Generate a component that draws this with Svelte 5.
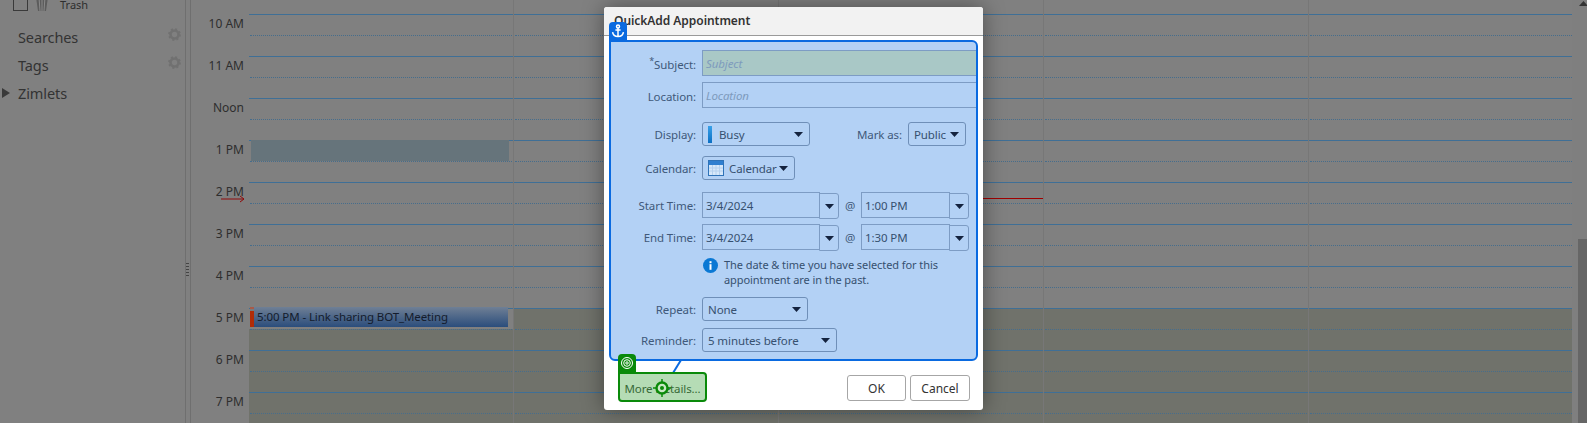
<script lang="ts">
  // Calendar backdrop under a QuickAdd dialog with anchor/target overlays.
  const hours = ['10 AM', '11 AM', 'Noon', '1 PM', '2 PM', '3 PM', '4 PM', '5 PM', '6 PM', '7 PM'];
  const days = [0, 1, 2, 3, 4];
  const isOff = (i: number) => i >= 7;
</script>

{#snippet caret()}
  <svg class="caret" width="9" height="5" viewBox="0 0 9 5"><path d="M0 0h9L4.5 5z" /></svg>
{/snippet}

{#snippet gear()}
  <svg class="gear" width="13" height="13" viewBox="0 0 13 13">
    <circle cx="6.5" cy="6.5" r="4" fill="none" stroke="#717171" stroke-width="2.6" />
    <circle cx="6.5" cy="6.5" r="5.4" fill="none" stroke="#717171" stroke-width="2" stroke-dasharray="2 2.24" />
  </svg>
{/snippet}

<div class="screen">
  <aside class="tree">
    <div class="trash">
      <span class="check"></span>
      <svg width="14" height="16" viewBox="0 0 14 16"><path d="M1 2h12l-2 14H3z" fill="#5c5c5c" /><path d="M4 2l1 14M7 2v14M10 2l-1 14" stroke="#8a8a8a" stroke-width="1" /></svg>
      <span class="trash-name">Trash</span>
    </div>
    <div class="node">Searches {@render gear()}</div>
    <div class="node">Tags {@render gear()}</div>
    <div class="node"><span class="tri"></span>Zimlets</div>
  </aside>

  <div class="sash"><span class="grip"></span></div>

  <div class="times">
    {#each hours as h}
      <div class="time">{h}</div>
    {/each}
    <svg class="now-arrow" width="24" height="8" viewBox="0 0 24 8"><path d="M0 4h23M19 1l4 3-4 3" fill="none" stroke="#8f0a0a" stroke-width="1" /></svg>
  </div>

  <div class="days">
    {#each days as d}
      <div class="day">
        {#each hours as _, i}
          <div class="hour" class:off={isOff(i) && (d > 0 || i > 7)} class:off-first={d === 0 && i === 7}></div>
        {/each}
      </div>
    {/each}
    <div class="slot"></div>
    <div class="appt"><span class="flag"></span>5:00 PM - Link sharing BOT_Meeting</div>
    <div class="now-line"></div>
  </div>

  <div class="scroll">
    <svg class="up" width="9" height="5" viewBox="0 0 9 5"><path d="M4.5 0L9 5H0z" /></svg>
    <div class="thumb"></div>
  </div>

  <section class="dialog">
    <header>QuickAdd Appointment</header>

    <div class="panel">
      <div class="row first">
        <span class="label nudge"><sup>*</sup>Subject:</span>
        <span class="input wide subject">Subject</span>
      </div>
      <div class="row r-location">
        <span class="label nudge">Location:</span>
        <span class="input wide">Location</span>
      </div>
      <div class="row r-display">
        <span class="label">Display:</span>
        <span class="select display"><span class="busy"></span>Busy {@render caret()}</span>
        <span class="label mark">Mark as:</span>
        <span class="select public">Public {@render caret()}</span>
      </div>
      <div class="row r-calendar">
        <span class="label">Calendar:</span>
        <span class="select calendar">
          <svg width="16" height="16" viewBox="0 0 16 16">
            <rect x=".5" y=".5" width="15" height="15" fill="#d6e8fa" stroke="#2f73b8" />
            <rect x="1" y="1" width="14" height="4" fill="#2f7fd0" />
            <path d="M1 8h14M1 11h14M4.5 5v10M8 5v10M11.5 5v10" stroke="#b4d0ee" stroke-width="1" />
          </svg>
          Calendar {@render caret()}
        </span>
      </div>
      <div class="row r-start">
        <span class="label">Start Time:</span>
        <span class="input date">3/4/2024</span><span class="drop">{@render caret()}</span>
        <span class="at">@</span>
        <span class="input clock">1:00 PM</span><span class="drop">{@render caret()}</span>
      </div>
      <div class="row r-end">
        <span class="label">End Time:</span>
        <span class="input date">3/4/2024</span><span class="drop">{@render caret()}</span>
        <span class="at">@</span>
        <span class="input clock">1:30 PM</span><span class="drop">{@render caret()}</span>
      </div>
      <div class="note">
        <svg width="15" height="15" viewBox="0 0 15 15">
          <circle cx="7.5" cy="7.5" r="7.5" fill="#0a78d4" />
          <rect x="6.5" y="6.2" width="2" height="5.6" fill="#fff" />
          <rect x="6.5" y="3.2" width="2" height="2" fill="#fff" />
        </svg>
        <p>The date &amp; time you have selected for this appointment are in the past.</p>
      </div>
      <div class="row r-repeat">
        <span class="label">Repeat:</span>
        <span class="select repeat">None {@render caret()}</span>
      </div>
      <div class="row r-reminder">
        <span class="label">Reminder:</span>
        <span class="select reminder">5 minutes before {@render caret()}</span>
      </div>
    </div>

    <footer>
      <button class="more">More Details...</button>
      <button class="ok">OK</button>
      <button class="cancel">Cancel</button>
    </footer>

    <!-- overlays from the element picker -->
    <span class="anchor-tab">
      <svg width="14" height="14" viewBox="0 0 14 14" fill="none" stroke="#fff" stroke-width="1.5">
        <circle cx="7" cy="2.4" r="1.5" />
        <path d="M7 4v9M4.4 6h5.2M1.6 8.2c.3 2.8 2.6 4.3 5.4 4.3s5.1-1.5 5.4-4.3" />
      </svg>
    </span>
    <svg class="link" width="12" height="14" viewBox="0 0 12 14"><path d="M10 0L2 13" stroke="#0a6ae0" stroke-width="2" /></svg>
    <span class="target-tab">
      <svg width="14" height="14" viewBox="0 0 14 14" fill="none" stroke="#fff" stroke-width="1">
        <circle cx="7" cy="7" r="5.5" /><circle cx="7" cy="7" r="3.3" /><circle cx="7" cy="7" r="1.2" />
      </svg>
    </span>
    <span class="target-box"></span>
    <svg class="target-mark" width="18" height="18" viewBox="0 0 18 18" fill="none" stroke="#0a8a0a">
      <circle cx="9" cy="9" r="5.5" stroke-width="2.4" fill="#c9e8c5" />
      <circle cx="9" cy="9" r="2" fill="#0a8a0a" stroke="none" />
      <path d="M9 0v3M9 15v3M0 9h3M15 9h3" stroke-width="1.5" />
    </svg>
  </section>
</div>

<style>
  :global(body) {
    margin: 0;
    background: #808080;
  }
  .screen {
    position: relative;
    width: 1587px;
    height: 423px;
    overflow: hidden;
    display: grid;
    grid-template-columns: 185px 6px 58px 1323px 15px;
    background: #808080;
    font-family: "Noto Sans", sans-serif;
    font-size: 12px;
    color: #2c2c2c;
  }

  .tree {
    border-right: 1px solid #6f6f6f;
    margin-right: -1px;
    color: #333;
  }
  .trash {
    display: flex;
    align-items: center;
    height: 10px;
    padding-left: 13px;
    font-size: 11px;
    margin-top: -2px;
    margin-bottom: 15px;
    color: #2e2e2e;
  }
  .trash svg {
    margin-left: 7px;
    flex: none;
  }
  .trash-name {
    margin-left: 11px;
    margin-top: 4px;
    line-height: 14px;
  }
  .check {
    width: 13px;
    height: 13px;
    border: 1px solid #3a3a3a;
    flex: none;
  }
  .node {
    position: relative;
    height: 28px;
    line-height: 28px;
    padding-left: 18px;
    font-size: 14.5px;
    letter-spacing: -0.1px;
  }
  .gear {
    position: absolute;
    left: 168px;
    top: 5px;
  }
  .tri {
    position: absolute;
    left: 2px;
    top: 9px;
    border-left: 8px solid #3a3a3a;
    border-top: 5px solid transparent;
    border-bottom: 5px solid transparent;
  }

  .sash {
    border-right: 1px solid #6f6f6f;
    position: relative;
  }
  .grip {
    position: absolute;
    left: 1px;
    top: 263px;
    width: 3px;
    height: 15px;
    background: repeating-linear-gradient(#444 0 1px, transparent 1px 3px);
  }

  .times {
    position: relative;
    padding-top: 14px;
    padding-right: 5px;
    text-align: right;
    color: #2e2e2e;
  }
  .time {
    height: 42px;
    padding-top: 1px;
    box-sizing: border-box;
    line-height: 18px;
  }
  .now-arrow {
    position: absolute;
    left: 30px;
    top: 195px;
  }

  .days {
    position: relative;
    display: flex;
    padding-top: 14px;
    align-items: stretch;
  }
  .day {
    flex: none;
    width: 263.5px;
    padding-right: 1.5px;
    background: linear-gradient(#777, #777) right / 1.5px 100% no-repeat;
    margin-top: -14px;
    padding-top: 14px;
  }
  .hour {
    position: relative;
    height: 42px;
    box-sizing: border-box;
    border-top: 1px solid #3f6f96;
  }
  .hour::after {
    content: "";
    position: absolute;
    left: 1px;
    right: 1px;
    top: 20px;
    border-top: 1px dotted #466d8c;
  }
  .off {
    background: #70726b;
  }
  .off-first {
    background: linear-gradient(#808080 0 20px, #70726b 20px);
  }
  .slot {
    position: absolute;
    left: 2px;
    top: 140px;
    width: 258px;
    height: 21px;
    background: #66747b;
  }
  .appt {
    position: absolute;
    left: 1px;
    top: 307px;
    width: 258px;
    height: 20px;
    padding-left: 7px;
    box-sizing: border-box;
    line-height: 20px;
    font-size: 11.5px;
    letter-spacing: -0.1px;
    color: #141c2c;
    background: linear-gradient(#6f7f95, #2b4d7c);
  }
  .flag {
    position: absolute;
    left: 0;
    top: 0;
    width: 4px;
    height: 20px;
    background: linear-gradient(#a85a48 0 2px, #7a7a7a 2px 4px, #b02c08 4px);
  }
  .now-line {
    position: absolute;
    left: 528px;
    width: 266px;
    top: 198px;
    height: 1px;
    background: #a00000;
  }

  .scroll {
    position: relative;
    background: #7f7f7f;
  }
  .up {
    position: absolute;
    left: 7px;
    top: 1px;
    fill: #333;
  }
  .thumb {
    position: absolute;
    left: 6px;
    right: 0;
    top: 239px;
    bottom: 0;
    background: #666;
  }

  .dialog {
    position: absolute;
    left: 604px;
    top: 7px;
    width: 379px;
    height: 403px;
    background: #fff;
    border-radius: 3px;
    box-shadow: 0 0 22px rgba(0, 0, 0, 0.4);
  }
  header {
    height: 28px;
    line-height: 27px;
    padding-left: 10px;
    background: #f2f2f2;
    border-bottom: 1px solid #9a9a9a;
    border-radius: 3px 3px 0 0;
    font-weight: 600;
    font-size: 12px;
    letter-spacing: -0.05px;
    color: #333;
  }
  .panel {
    box-sizing: border-box;
    width: 369px;
    height: 321px;
    margin: 4px 0 0 5px;
    padding-top: 8px;
    border: 2px solid #0a6ae0;
    border-radius: 0 6px 6px 6px;
    background: #b3d1f5;
    overflow: hidden;
    color: #40597a;
    font-size: 11.5px;
    letter-spacing: -0.1px;
  }
  .row {
    display: flex;
    align-items: center;
    height: 26px;
  }
  .r-location { margin-top: 6px; }
  .r-display { margin-top: 14px; height: 24px; }
  .r-calendar { margin-top: 10px; height: 24px; }
  .r-start { margin-top: 12px; }
  .r-end { margin-top: 6px; }
  .r-repeat { margin-top: 10px; height: 24px; }
  .r-reminder { margin-top: 7px; height: 24px; }
  .label {
    flex: none;
    width: 85px;
    text-align: right;
    white-space: nowrap;
  }
  .label.nudge {
    padding-top: 2px;
  }
  .label sup {
    font-size: 9px;
    line-height: 0;
  }
  .label.mark {
    width: 92px;
  }
  .input {
    flex: none;
    box-sizing: border-box;
    height: 26px;
    line-height: 25px;
    margin-left: 6px;
    padding-left: 3px;
    border: 1px solid #7d9cc4;
    color: #36506f;
  }
  .wide {
    width: 290px;
    line-height: 26px;
    font-style: italic;
    color: #7e9bbd;
  }
  .subject {
    background: #a9c8c6;
  }
  .date {
    width: 118px;
  }
  .clock {
    width: 89px;
    margin-left: 0;
  }
  .drop {
    flex: none;
    box-sizing: border-box;
    width: 20px;
    height: 26px;
    margin-left: -1px;
    position: relative;
    top: 1px;
    display: flex;
    align-items: center;
    justify-content: center;
    border: 1px solid #7d9cc4;
    border-radius: 0 3px 3px 0;
  }
  .at {
    flex: none;
    width: 22px;
    text-align: center;
  }
  .select {
    flex: none;
    box-sizing: border-box;
    height: 24px;
    margin-left: 6px;
    padding-left: 5px;
    display: flex;
    align-items: center;
    border: 1px solid #6f8fb8;
    border-radius: 3px;
    color: #36506f;
    position: relative;
  }
  .caret {
    fill: #14233f;
    flex: none;
  }
  .select .caret {
    position: absolute;
    right: 6px;
    top: 9px;
  }
  .display { width: 108px; }
  .public { width: 58px; }
  .calendar { width: 93px; gap: 5px; }
  .repeat { width: 106px; }
  .reminder { width: 135px; }
  .busy {
    width: 4px;
    height: 17px;
    margin-right: 7px;
    background: linear-gradient(#38a0e8, #0a6fc4);
  }
  .note {
    display: flex;
    gap: 6px;
    align-items: flex-start;
    margin: 7px 0 0 92px;
    width: 245px;
  }
  .note svg {
    flex: none;
    margin-top: 1px;
  }
  .note p {
    margin: 0;
    line-height: 15px;
    font-size: 11px;
    letter-spacing: -0.07px;
    color: #36506f;
  }

  footer {
    display: flex;
    align-items: flex-start;
    margin-top: 14px;
    padding-left: 16px;
  }
  button {
    box-sizing: border-box;
    height: 26px;
    padding: 0;
    font: inherit;
    color: #333;
    background: #fff;
    border: 1px solid #a6a6a6;
    border-radius: 3px;
  }
  .more {
    width: 85px;
    font-size: 11.5px;
    letter-spacing: -0.1px;
    color: #4d5a4d;
    border-color: transparent;
  }
  .ok {
    width: 59px;
    margin-left: 142px;
  }
  .cancel {
    width: 60px;
    margin-left: 4px;
  }

  .anchor-tab,
  .target-tab {
    position: absolute;
    width: 18px;
    height: 18px;
    display: flex;
    align-items: center;
    justify-content: center;
    border-radius: 4px 4px 0 0;
  }
  .anchor-tab {
    left: 5px;
    top: 15px;
    background: #0a6ae0;
  }
  .target-tab {
    left: 14px;
    top: 347px;
    background: #0a8a0a;
  }
  .link {
    position: absolute;
    left: 67px;
    top: 353px;
  }
  .target-box {
    position: absolute;
    left: 14px;
    top: 365px;
    width: 89px;
    height: 30px;
    box-sizing: border-box;
    border: 2px solid #0a8a0a;
    border-radius: 0 4px 4px 4px;
    background: rgba(10, 138, 10, 0.3);
  }
  .target-mark {
    position: absolute;
    left: 49px;
    top: 372px;
  }
</style>
